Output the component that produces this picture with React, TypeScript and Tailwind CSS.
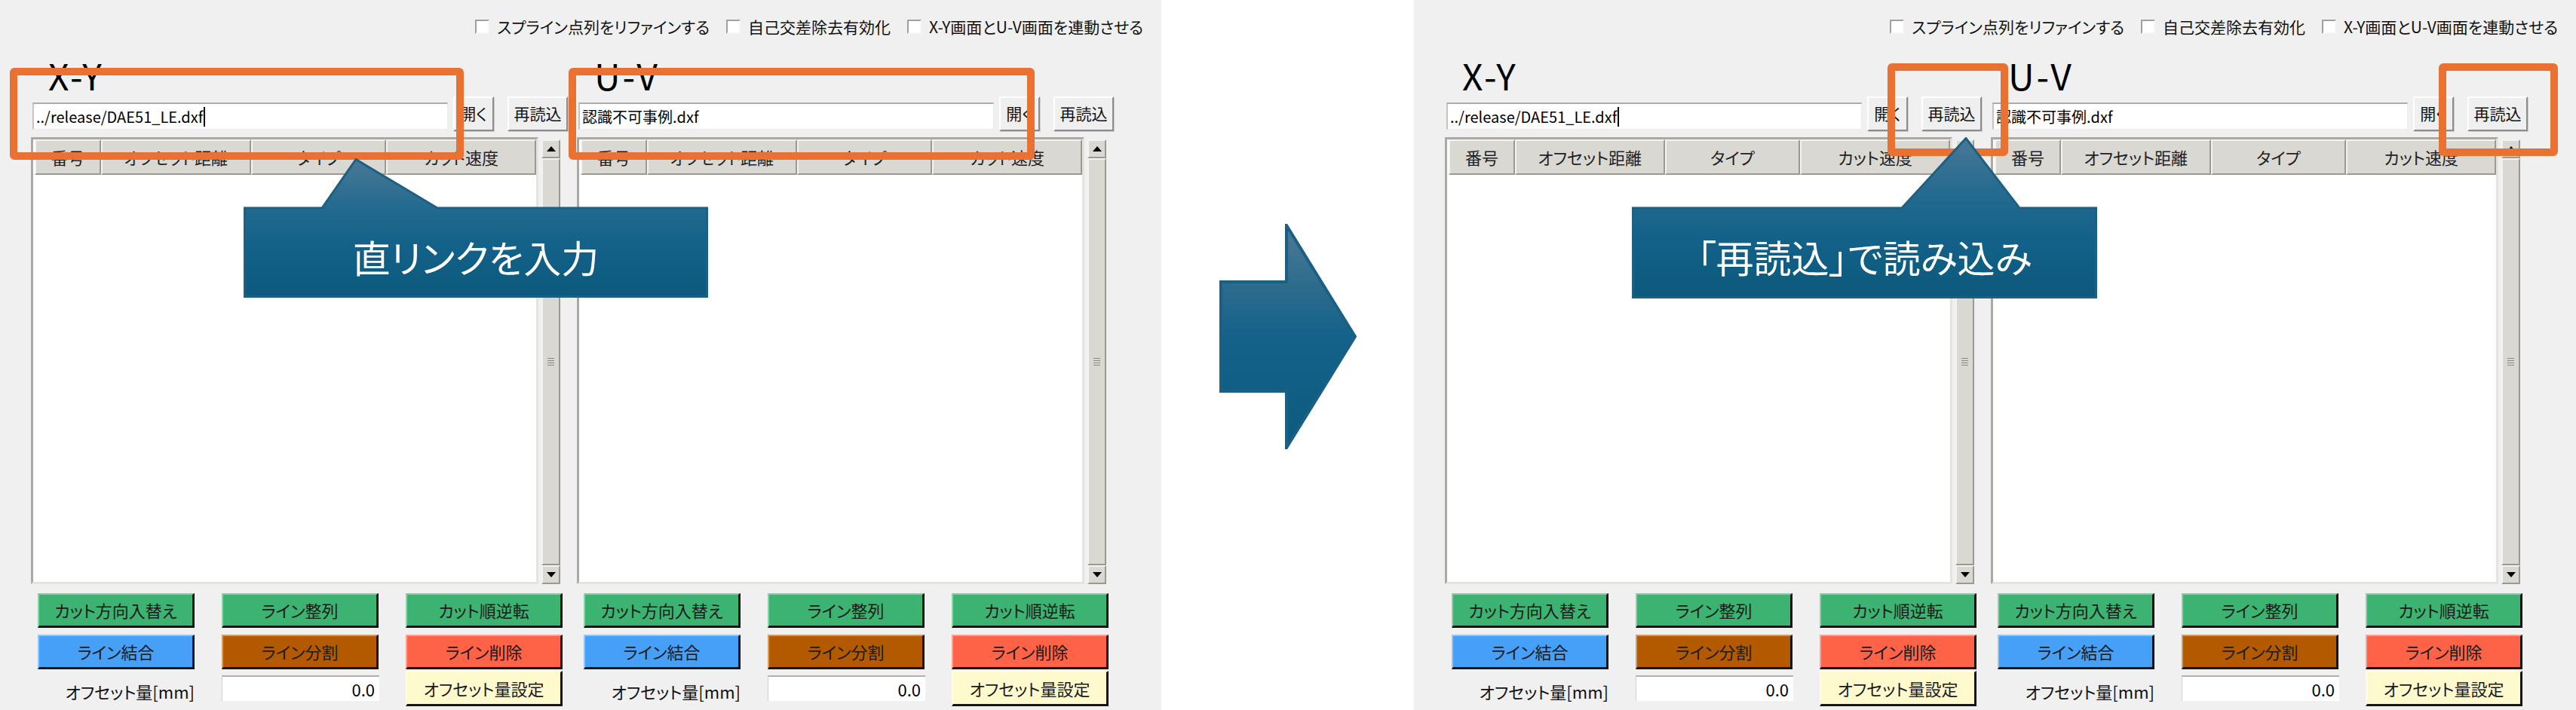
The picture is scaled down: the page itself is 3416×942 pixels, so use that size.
import React from "react"

const jp = "font-['Noto_Sans_CJK_JP','Noto_Sans',sans-serif] [font-feature-settings:'palt']"

function CheckItem({ label }: { label: string }) {
    return (
        <div className="flex items-center gap-[10px]">
            <span className="w-[19px] h-[19px] bg-white border-2 border-t-[#a0a0a0] border-l-[#a0a0a0] border-b-[#f6f6f6] border-r-[#f6f6f6]" />
            <span className="text-[21px] leading-none text-[#111]">{label}</span>
        </div>
    )
}

function WinButton({ label, width }: { label: string; width: string }) {
    return (
        <div
            className={`${width} h-[46px] flex items-center justify-center bg-[#efefef] border-2 border-t-white border-l-white border-b-[#8c8c8c] border-r-[#8c8c8c] shadow-[1px_1px_0_#cfcfcf] text-[21px] text-[#111]`}
        >
            {label}
        </div>
    )
}

function HeaderCell({ label, width }: { label: string; width: string }) {
    return (
        <div
            className={`${width} h-full flex items-center justify-center bg-[#dad8d2] border-2 border-t-[#f4f3f0] border-l-[#f4f3f0] border-b-[#9c998f] border-r-[#9c998f] text-[22px] text-[#222]`}
        >
            {label}
        </div>
    )
}

function Scrollbar() {
    return (
        <div className="w-[25px] h-full flex flex-col pt-[3px]">
            {/* up arrow */}
            <div className="h-[25px] flex items-center justify-center bg-[#dad8d2] border-2 border-t-[#f4f3f0] border-l-[#f4f3f0] border-b-[#9c998f] border-r-[#9c998f]">
                <svg width="12" height="7" viewBox="0 0 12 7">
                    <path d="M6 0 L12 7 L0 7 Z" fill="#000" />
                </svg>
            </div>
            {/* thumb */}
            <div className="flex-1 flex flex-col items-center justify-center gap-[2px] bg-[#dad8d2] border-2 border-t-[#f4f3f0] border-l-[#f4f3f0] border-b-[#9c998f] border-r-[#9c998f]">
                <div className="w-[9px] h-px bg-[#8a877f]" />
                <div className="w-[9px] h-px bg-[#8a877f]" />
                <div className="w-[9px] h-px bg-[#8a877f]" />
                <div className="w-[9px] h-px bg-[#8a877f]" />
            </div>
            {/* down arrow */}
            <div className="h-[25px] flex items-center justify-center bg-[#dad8d2] border-2 border-t-[#f4f3f0] border-l-[#f4f3f0] border-b-[#9c998f] border-r-[#9c998f]">
                <svg width="12" height="7" viewBox="0 0 12 7">
                    <path d="M0 0 L12 0 L6 7 Z" fill="#000" />
                </svg>
            </div>
        </div>
    )
}

function ColorButton({ label, color }: { label: string; color: string }) {
    return (
        <div
            className={`${color} h-full flex items-center justify-center border-t-2 border-l-2 border-t-white/40 border-l-white/40 border-b-[3px] border-r-[3px] border-b-[#151515] border-r-[#151515] text-[22px] text-[#1a1a1a]`}
        >
            {label}
        </div>
    )
}

function Panel({ title, file, caret }: { title: string; file: string; caret?: boolean }) {
    return (
        <div className="w-[724px] shrink-0 flex flex-col">
            {/* title */}
            <div className="h-[58px] pt-[5px] pl-[23px]">
                <span className="text-[48px] leading-none tracking-[3px] text-black">{title}</span>
            </div>

            {/* file row */}
            <div className="h-[46px] flex items-start">
                <div className="ml-[2px] mt-[8px] w-[551px] h-[36px] flex items-center pl-[3px] bg-white border-t-2 border-l-2 border-t-[#ababab] border-l-[#c4c4c4] border-b border-r border-b-[#ececec] border-r-[#ececec] text-[20px] text-black">
                    <span>{file}</span>
                    {caret && <span className="ml-px w-[2px] h-[26px] bg-black" />}
                </div>
                <div className="ml-[7px]">
                    <WinButton label="開く" width="w-[54px]" />
                </div>
                <div className="ml-[18px]">
                    <WinButton label="再読込" width="w-[80px]" />
                </div>
            </div>

            {/* list */}
            <div className="mt-[8px] h-[593px] flex gap-[4px]">
                <div className="w-[673px] h-full bg-white border-[3px] border-t-[#aaa9a5] border-l-[#aaa9a5] border-b-[#e4e3e0] border-r-[#e4e3e0] pl-[2px]">
                    <div className="flex h-[47px]">
                        <HeaderCell label="番号" width="w-[88px]" />
                        <HeaderCell label="オフセット距離" width="w-[199px]" />
                        <HeaderCell label="タイプ" width="w-[180px]" />
                        <HeaderCell label="カット速度" width="w-[199px]" />
                    </div>
                </div>
                <Scrollbar />
            </div>

            {/* action buttons */}
            <div className="ml-[9px] mt-[12px] grid grid-cols-[208px_208px_208px] gap-x-[36px]">
                <div className="h-[46px]">
                    <ColorButton label="カット方向入替え" color="bg-[#3cb371]" />
                </div>
                <div className="h-[46px]">
                    <ColorButton label="ライン整列" color="bg-[#3cb371]" />
                </div>
                <div className="h-[46px]">
                    <ColorButton label="カット順逆転" color="bg-[#3cb371]" />
                </div>

                <div className="h-[46px] mt-[9px]">
                    <ColorButton label="ライン結合" color="bg-[#47a0f7]" />
                </div>
                <div className="h-[46px] mt-[9px]">
                    <ColorButton label="ライン分割" color="bg-[#b35a00]" />
                </div>
                <div className="h-[46px] mt-[9px]">
                    <ColorButton label="ライン削除" color="bg-[#ff6347]" />
                </div>

                <div className="h-[47px] mt-[2px] flex items-center justify-end pt-[8px] text-[22px] text-[#111]">
                    オフセット量[mm]
                </div>
                <div className="h-[47px] mt-[2px] pt-[6px]">
                    <div className="w-[209px] h-[34px] flex items-center justify-end pr-[6px] bg-white border-t-2 border-l border-t-[#b0b0b0] border-l-[#d0d0d0] text-[22px] text-black">
                        0.0
                    </div>
                </div>
                <div className="h-[47px] mt-[2px]">
                    <ColorButton label="オフセット量設定" color="bg-[#fffacd]" />
                </div>
            </div>
        </div>
    )
}

function Callout({
    id,
    className,
    w,
    h,
    tailY,
    apexX,
    baseL,
    baseR,
    text,
}: {
    id: string
    className: string
    w: number
    h: number
    tailY: number
    apexX: number
    baseL: number
    baseR: number
    text: string
}) {
    const d = `M1.5 ${tailY} H${baseL} L${apexX} 1.5 L${baseR} ${tailY} H${w - 1.5} V${h - 1.5} H1.5 Z`
    return (
        <div className={`absolute ${className}`}>
            <svg className="absolute inset-0" width={w} height={h} viewBox={`0 0 ${w} ${h}`}>
                <defs>
                    <linearGradient id={id} x1="0" y1="0" x2="0" y2="1">
                        <stop offset="0%" stopColor="#4a7895" />
                        <stop offset="35%" stopColor="#236a8f" />
                        <stop offset="60%" stopColor="#14628a" />
                        <stop offset="100%" stopColor="#0c597c" />
                    </linearGradient>
                </defs>
                <path d={d} fill={`url(#${id})`} stroke="#1b6085" strokeWidth="3" strokeLinejoin="miter" />
            </svg>
            <div
                className="absolute left-0 right-0 bottom-0 flex items-center justify-center pt-[8px] text-[50px] leading-none text-white font-['Noto_Sans_CJK_JP',sans-serif]"
                style={{ top: tailY }}
            >
                {text}
            </div>
        </div>
    )
}

function Screen({ step }: { step: 1 | 2 }) {
    return (
        <div
            className={`relative h-[942px] shrink-0 overflow-hidden bg-[#f0f0f0] ${step === 1 ? "w-[1540px]" : "w-[1541px]"} ${jp}`}
        >
            <div className="h-[70px] flex justify-end items-start pt-[25px] pr-[24px] gap-[22px]">
                <CheckItem label="スプライン点列をリファインする" />
                <CheckItem label="自己交差除去有効化" />
                <CheckItem label="X-Y画面とU-V画面を連動させる" />
            </div>
            <div className="flex pl-[41px]">
                <Panel title="X-Y" file="../release/DAE51_LE.dxf" caret />
                <Panel title="U-V" file="認識不可事例.dxf" />
            </div>

            {step === 1 ? (
                <>
                    <div className="absolute left-[13px] top-[90px] w-[602px] h-[122px] border-[10px] border-[#ea7132] rounded-[6px]" />
                    <div className="absolute left-[754px] top-[90px] w-[618px] h-[122px] border-[10px] border-[#ea7132] rounded-[6px]" />
                    <Callout
                        id="g1"
                        className="left-[323px] top-[210px] w-[616px] h-[185px]"
                        w={616}
                        h={185}
                        tailY={66}
                        apexX={149}
                        baseL={104}
                        baseR={257}
                        text="直リンクを入力"
                    />
                </>
            ) : (
                <>
                    <div className="absolute left-[628px] top-[84px] w-[160px] h-[123px] border-[10px] border-[#ea7132] rounded-[6px]" />
                    <div className="absolute left-[1359px] top-[84px] w-[158px] h-[123px] border-[10px] border-[#ea7132] rounded-[6px]" />
                    <Callout
                        id="g2"
                        className="left-[289px] top-[182px] w-[617px] h-[214px]"
                        w={617}
                        h={214}
                        tailY={94}
                        apexX={443}
                        baseL={358}
                        baseR={514}
                        text="「再読込」で読み込み"
                    />
                </>
            )}
        </div>
    )
}

export default function App() {
    return (
        <div className="flex w-[3416px] h-[942px] bg-white">
            <Screen step={1} />
            <div className="w-[335px] shrink-0 bg-white">
                <svg className="ml-[77px] mt-[297px]" width="182" height="299" viewBox="0 0 182 299">
                    <defs>
                        <linearGradient id="arrowFill" x1="0" y1="0" x2="0" y2="1">
                            <stop offset="0%" stopColor="#4d7a96" />
                            <stop offset="30%" stopColor="#2a6a8c" />
                            <stop offset="50%" stopColor="#14628a" />
                            <stop offset="100%" stopColor="#0c5a7e" />
                        </linearGradient>
                    </defs>
                    <path
                        d="M2 77 H89 V2 L180 149.5 L89 297 V222 H2 Z"
                        fill="url(#arrowFill)"
                        stroke="#1a5f84"
                        strokeWidth="4"
                    />
                </svg>
            </div>
            <Screen step={2} />
        </div>
    )
}
